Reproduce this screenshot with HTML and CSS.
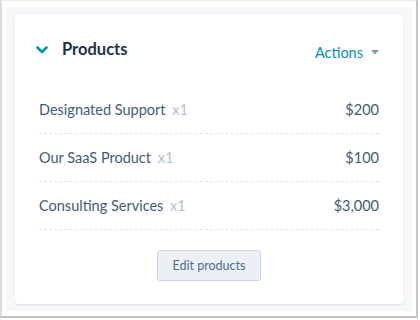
FILE: index.html
```html
<!DOCTYPE html>
<html lang="en">
<head>
    <meta charset="UTF-8">
    <title>Products</title>
    <link rel="stylesheet" href="styles.css">
</head>
<body>
    <div class="frame">
        <div class="panel">
            <div class="card">
                <div class="header">
                    <div class="title">
                        <svg class="chevron" width="12" height="8" viewBox="0 0 12 8">
                            <path d="M1.5 1.5 L6 6 L10.5 1.5" fill="none" stroke="#0091ae" stroke-width="2.6" stroke-linecap="round" stroke-linejoin="round"/>
                        </svg>
                        <span>Products</span>
                    </div>
                    <div class="actions">
                        Actions
                        <svg class="caret" width="8" height="5" viewBox="0 0 8 5">
                            <path d="M0 0 L8 0 L4 4.5 Z" fill="#7c98b6"/>
                        </svg>
                    </div>
                </div>
                <div class="rows">
                    <div class="row">
                        <span class="name">Designated Support <span class="qty">x1</span></span>
                        <span class="price">$200</span>
                    </div>
                    <div class="row">
                        <span class="name">Our SaaS Product <span class="qty">x1</span></span>
                        <span class="price">$100</span>
                    </div>
                    <div class="row">
                        <span class="name">Consulting Services <span class="qty">x1</span></span>
                        <span class="price">$3,000</span>
                    </div>
                </div>
                <div class="footer">
                    <button class="edit">Edit products</button>
                </div>
            </div>
        </div>
    </div>
</body>
</html>
```

FILE: styles.css
```css
body {
    margin: 0;
    background-color: white;
    font-family: Lato, "Open Sans", sans-serif;
    color: #33475b;
}
.frame {
    box-sizing: border-box;
    width: 418px;
    height: 318px;
    border-top: 1px solid #ececec;
    border-left: 2px solid #dcdcdc;
    border-right: 2px solid #c6c6c6;
    border-bottom: 2px solid #c2c2c2;
    padding: 6px 4px 5px 5px;
    display: flex;
}
.panel {
    flex: 1;
    background-color: #f5f8fa;
    padding: 8px 9px 7px 8px;
    display: flex;
}
.card {
    flex: 1;
    background-color: white;
    border-radius: 4px;
    box-shadow: 0 1px 2px rgba(45, 62, 80, 0.12);
    padding: 0 24px;
}
.header {
    display: flex;
    justify-content: space-between;
    align-items: center;
    height: 71px;
    padding-bottom: 3px;
    box-sizing: border-box;
}
.title {
    display: flex;
    align-items: center;
    font-size: 16.5px;
    font-weight: bold;
    color: #213343;
    margin-left: -3px;
}
.chevron {
    margin-right: 14px;
    margin-top: 1px;
}
.actions {
    display: flex;
    align-items: center;
    font-size: 14.5px;
    color: #0091ae;
    margin-top: 6px;
}
.caret {
    margin-left: 8px;
    margin-top: 1px;
}
.row {
    display: flex;
    justify-content: space-between;
    align-items: center;
    height: 47px;
    border-bottom: 1px dashed #dfe3eb;
    font-size: 14.5px;
    color: #425b76;
}
.qty {
    color: #b0c1d4;
    margin-left: 3px;
}
.price {
    color: #425b76;
}
.footer {
    display: flex;
    justify-content: center;
    padding-top: 20px;
}
.edit {
    font-family: Lato, "Open Sans", sans-serif;
    font-size: 12.5px;
    color: #506e91;
    background-color: #eaf0f6;
    border: 1px solid #cbd6e2;
    border-radius: 3px;
    width: 104px;
    height: 31px;
    padding: 0;
}
```
